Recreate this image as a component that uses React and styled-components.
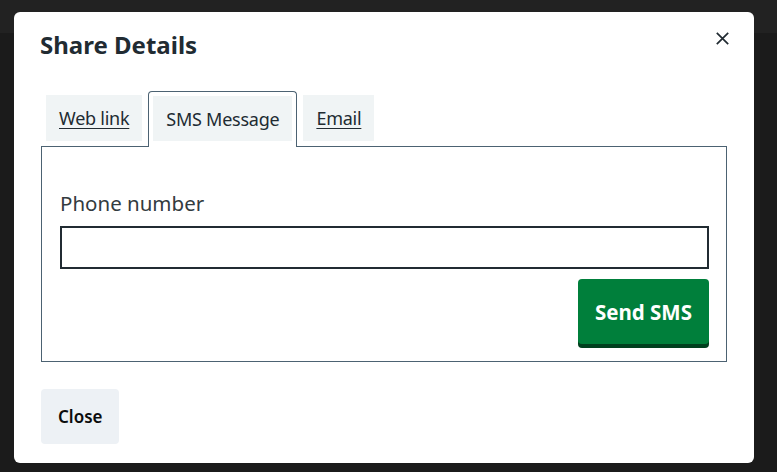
import React, { useState } from "react";
import styled, { createGlobalStyle } from "styled-components";

const Global = createGlobalStyle`
  html, body { margin: 0; padding: 0; }
  body {
    background: #1b1b1b;
    font-family: "Noto Sans", "Open Sans", Arial, sans-serif;
    width: 777px;
    height: 472px;
    overflow: hidden;
  }
  * { box-sizing: border-box; }
`;

const Backdrop = styled.div`
  width: 777px;
  height: 472px;
  background: linear-gradient(#222222 0 33px, #1b1b1b 33px);
  padding: 12px 0 0 14px;
`;

const Dialog = styled.div`
  position: relative;
  width: 740px;
  height: 451px;
  background: #ffffff;
  border-radius: 6px;
  padding: 17px 27px 19px 27px;
  display: flex;
  flex-direction: column;
`;

const Title = styled.h2`
  margin: 0 0 0 -1px;
  font-size: 24px;
  line-height: 32px;
  font-weight: 700;
  color: #212b32;
`;

const CloseX = styled.button`
  position: absolute;
  top: 13px;
  right: 19px;
  width: 26px;
  height: 26px;
  padding: 0;
  border: 0;
  background: transparent;
  display: flex;
  align-items: center;
  justify-content: center;
  cursor: pointer;
`;

const TabList = styled.div`
  display: flex;
  margin-top: 30px;
  position: relative;
  z-index: 1;
`;

const Tab = styled.div`
  padding: ${(p) => (p.$active ? "4px 4px 6px" : "3px 4px 6px")};
  margin-right: 1px;
  border: 1px solid ${(p) => (p.$active ? "#4c6272" : "transparent")};
  border-bottom: 0;
  border-radius: 4px 4px 0 0;
  background: ${(p) => (p.$active ? "#ffffff" : "transparent")};
  margin-bottom: -1px;
`;

const TabInner = styled.div`
  background: #f0f4f5;
  height: ${(p) => (p.$active ? "45px" : "46px")};
  padding: 0 13px;
  display: flex;
  align-items: center;
  font-size: 18px;
  letter-spacing: -0.25px;
  color: #212b32;
  text-decoration: ${(p) => (p.$active ? "none" : "underline")};
  text-underline-offset: 3px;
  text-decoration-thickness: 1px;
  white-space: nowrap;
`;

const Panel = styled.div`
  border: 1px solid #4c6272;
  padding: 41px 17px 13px 18px;
  display: flex;
  flex-direction: column;
`;

const Label = styled.label`
  font-size: 20.5px;
  line-height: 30px;
  color: #333b40;
  margin-bottom: 8px;
`;

const Input = styled.input`
  height: 43px;
  border: 2px solid #212b32;
  font-size: 19px;
  font-family: inherit;
  padding: 0 8px;
  outline: none;
`;

const Actions = styled.div`
  display: flex;
  justify-content: flex-end;
  margin-top: 10px;
`;

const PrimaryButton = styled.button`
  height: 65px;
  padding: 0 17px;
  border: 0;
  border-radius: 4px;
  background: #007f3b;
  box-shadow: 0 4px 0 #00401e;
  color: #ffffff;
  font-family: inherit;
  font-size: 20.5px;
  font-weight: 700;
  cursor: pointer;
  margin-bottom: 4px;
`;

const Footer = styled.div`
  margin-top: auto;
  display: flex;
`;

const SecondaryButton = styled.button`
  height: 55px;
  padding: 0 17px;
  border: 0;
  border-radius: 4px;
  background: #edf1f5;
  color: #0b0c0c;
  font-family: inherit;
  font-size: 17px;
  font-weight: 600;
  cursor: pointer;
`;

const tabs = ["Web link", "SMS Message", "Email"];

export default function App() {
  const [active, setActive] = useState(1);
  return (
    <>
      <Global />
      <Backdrop>
        <Dialog>
          <Title>Share Details</Title>
          <CloseX aria-label="Close">
            <svg width="13" height="13" viewBox="0 0 13 13">
              <path d="M0.8 0.8L12.2 12.2M12.2 0.8L0.8 12.2" stroke="#212b32" strokeWidth="1.7" />
            </svg>
          </CloseX>
          <TabList>
            {tabs.map((t, i) => (
              <Tab key={t} $active={i === active} onClick={() => setActive(i)}>
                <TabInner $active={i === active}>{t}</TabInner>
              </Tab>
            ))}
          </TabList>
          <Panel>
            <Label>Phone number</Label>
            <Input type="tel" />
            <Actions>
              <PrimaryButton>Send SMS</PrimaryButton>
            </Actions>
          </Panel>
          <Footer>
            <SecondaryButton>Close</SecondaryButton>
          </Footer>
        </Dialog>
      </Backdrop>
    </>
  );
}
